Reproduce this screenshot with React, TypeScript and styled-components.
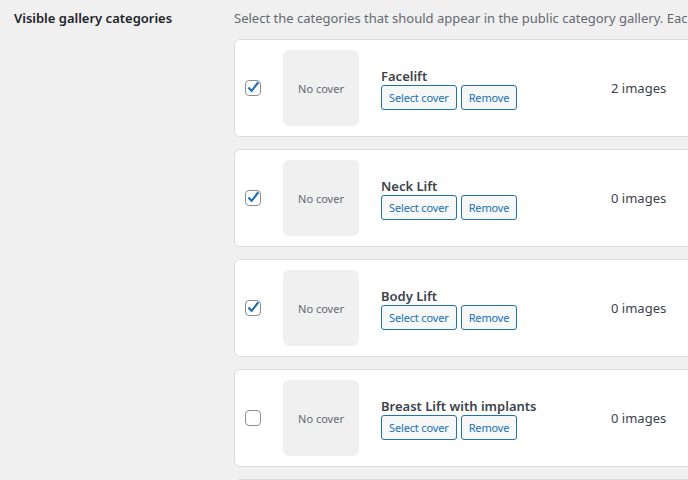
import styled, { createGlobalStyle } from "styled-components";

type Category = {
  name: string;
  count: number;
  visible: boolean;
};

const categories: Category[] = [
  { name: "Facelift", count: 2, visible: true },
  { name: "Neck Lift", count: 0, visible: true },
  { name: "Body Lift", count: 0, visible: true },
  { name: "Breast Lift with implants", count: 0, visible: false },
  { name: "Tummy Tuck", count: 0, visible: false },
];

const GlobalStyle = createGlobalStyle`
  html, body {
    margin: 0;
    padding: 0;
    background: #f0f0f1;
    overflow: hidden;
  }
  body {
    font-family: "Noto Sans", "Open Sans", sans-serif;
    font-size: 13px;
    color: #3c434a;
  }
`;

const FormRow = styled.div`
  display: grid;
  grid-template-columns: 220px 1fr;
  padding: 8px 0 0 14px;
  height: 480px;
  overflow: hidden;
`;

const Label = styled.div`
  font-weight: 600;
  color: #1d2327;
  line-height: 20px;
`;

const Field = styled.div`
  display: flex;
  flex-direction: column;
  min-width: 0;
`;

const Description = styled.p`
  margin: 0 0 11px;
  line-height: 20px;
  color: #646970;
  white-space: nowrap;
`;

const List = styled.div`
  display: flex;
  flex-direction: column;
  gap: 12px;
  width: 520px;
`;

const Card = styled.div`
  display: grid;
  grid-template-columns: 16px 76px 208px auto;
  align-items: center;
  column-gap: 22px;
  padding: 10px 11px 10px 10px;
  background: #fff;
  border: 1px solid #dcdcde;
  border-radius: 6px;
`;

const CheckBox = styled.span<{ $checked: boolean }>`
  width: 16px;
  height: 16px;
  box-sizing: border-box;
  border: 1px solid #8c8f94;
  border-radius: 4px;
  background: #fff;
  position: relative;

  svg {
    display: ${(p) => (p.$checked ? "block" : "none")};
    position: absolute;
    left: -2px;
    top: -4px;
  }
`;

const Cover = styled.div`
  width: 76px;
  height: 76px;
  border-radius: 6px;
  background: #f0f0f1;
  display: flex;
  align-items: center;
  justify-content: center;
  font-size: 11px;
  color: #646970;
`;

const Info = styled.div`
  display: flex;
  flex-direction: column;
`;

const Title = styled.div`
  font-weight: 600;
  color: #3c434a;
  line-height: 18px;
  white-space: nowrap;
`;

const Buttons = styled.div`
  display: flex;
  gap: 4px;
`;

const Button = styled.button`
  font-family: inherit;
  font-size: 11px;
  letter-spacing: -0.15px;
  line-height: 23px;
  height: 25px;
  padding: 0 7px;
  color: #2271b1;
  background: #f6f7f7;
  border: 1px solid #2271b1;
  border-radius: 3px;
  cursor: pointer;
  white-space: nowrap;
`;

const Count = styled.span`
  white-space: nowrap;
  color: #3c434a;
`;

function Check() {
  return (
    <svg width="18" height="20" viewBox="0 0 18 20" aria-hidden="true">
      <path
        d="M3.6 11.2 L5.2 9.7 L7.6 12.2 L13.4 4.6 L15.2 6 L7.7 15.4 Z"
        fill="#2271b1"
      />
    </svg>
  );
}

export default function App() {
  return (
    <>
      <GlobalStyle />
      <FormRow>
        <Label>Visible gallery categories</Label>
        <Field>
          <Description>
            Select the categories that should appear in the public category
            gallery. Each category can have its own cover image.
          </Description>
          <List>
            {categories.map((c) => (
              <Card key={c.name}>
                <CheckBox $checked={c.visible}>
                  <Check />
                </CheckBox>
                <Cover>No cover</Cover>
                <Info>
                  <Title>{c.name}</Title>
                  <Buttons>
                    <Button>Select cover</Button>
                    <Button>Remove</Button>
                  </Buttons>
                </Info>
                <Count>
                  {c.count} {c.count === 1 ? "image" : "images"}
                </Count>
              </Card>
            ))}
          </List>
        </Field>
      </FormRow>
    </>
  );
}
